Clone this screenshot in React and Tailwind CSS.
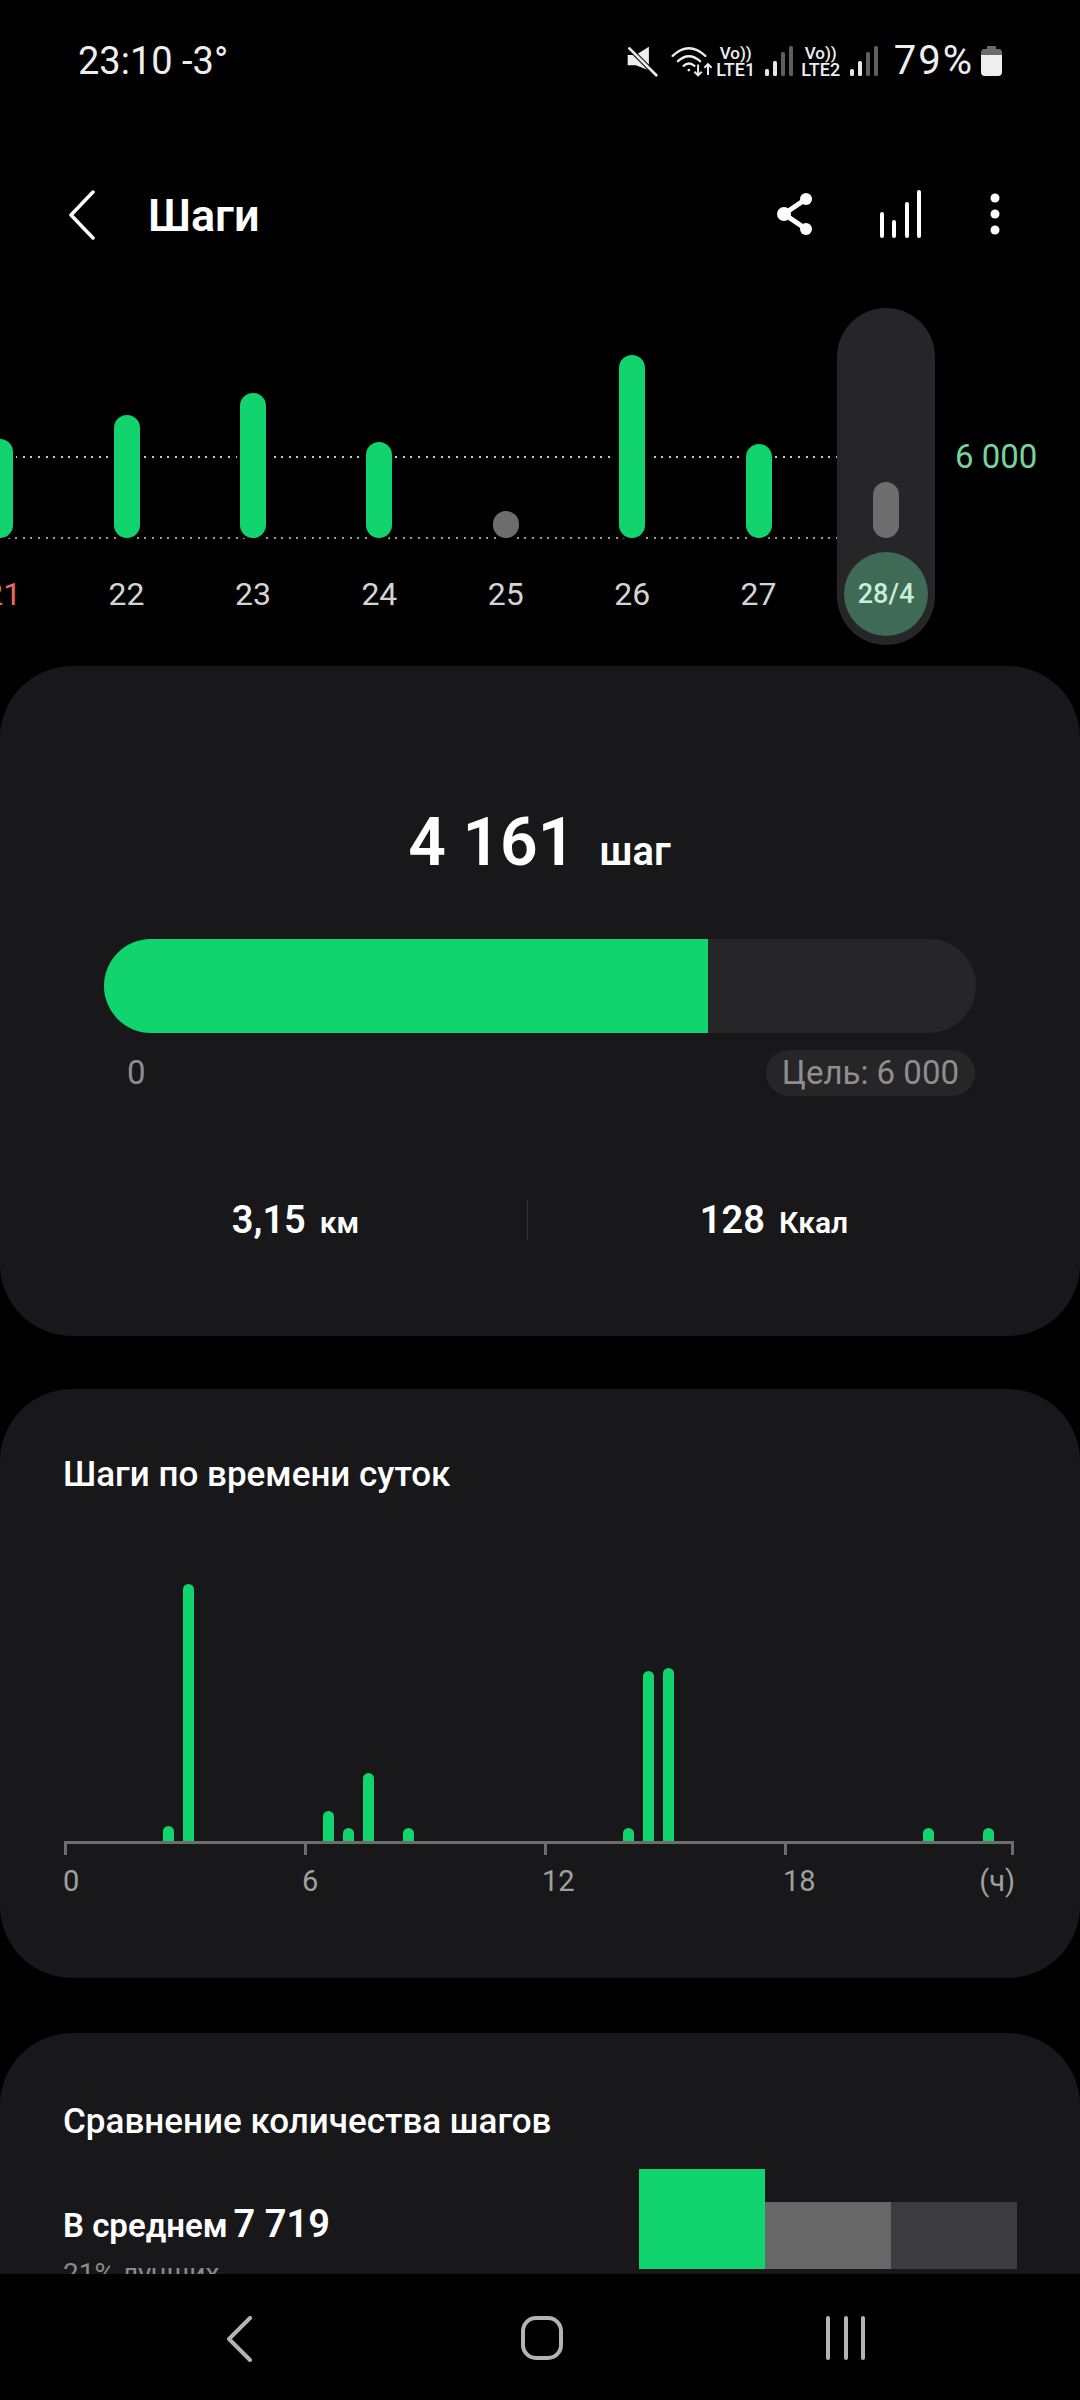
import React from 'react';

const week = [
    { day: '21', height: 'h-[99px]', dayColor: 'ml-[6px] text-[#e46a66]', color: 'bg-[#12d46f]' },
    { day: '22', height: 'h-[123px]', dayColor: 'text-[#d4d4d4]', color: 'bg-[#12d46f]' },
    { day: '23', height: 'h-[145px]', dayColor: 'text-[#d4d4d4]', color: 'bg-[#12d46f]' },
    { day: '24', height: 'h-[96px]', dayColor: 'text-[#d4d4d4]', color: 'bg-[#12d46f]' },
    { day: '25', height: 'h-[27px]', dayColor: 'text-[#d4d4d4]', color: 'bg-[#6d6d6e]' },
    { day: '26', height: 'h-[183px]', dayColor: 'text-[#d4d4d4]', color: 'bg-[#12d46f]' },
    { day: '27', height: 'h-[94px]', dayColor: 'text-[#d4d4d4]', color: 'bg-[#12d46f]' },
];

// half hour slots with steps, everything else is empty
const hourBars = {
    5: 'h-[15px]',
    6: 'h-[257px]',
    13: 'h-[30px]',
    14: 'h-[13px]',
    15: 'h-[68px]',
    17: 'h-[13px]',
    28: 'h-[13px]',
    29: 'h-[170px]',
    30: 'h-[173px]',
    43: 'h-[13px]',
    46: 'h-[13px]',
};

const slots = Array.from({ length: 48 }, (_, i) => i);

const Signal = () => (
    <svg width="28" height="30" viewBox="0 0 28 30" className="shrink-0">
        <rect x="0" y="23" width="4" height="7" rx="1.5" fill="#e8e8e8" />
        <rect x="8" y="15" width="4" height="15" rx="1.5" fill="#e8e8e8" />
        <rect x="16" y="6" width="4" height="24" rx="1.5" fill="#5e5e5e" />
        <rect x="24" y="0" width="4" height="30" rx="1.5" fill="#5e5e5e" />
    </svg>
);

const Lte = ({ n }) => (
    <div className="flex w-[40px] shrink-0 flex-col items-center text-[#eeeeee]">
        <span className="text-[17px] font-medium leading-[17px]">Vo))</span>
        <span className="text-[18px] font-medium leading-[16px]">LTE{n}</span>
    </div>
);

const StatusBar = () => (
    <div className="flex h-[122px] items-center justify-between pl-[78px] pr-[78px] text-[#eeeeee]">
        <span className="text-[38px] leading-none">23:10 -3°</span>
        <div className="flex items-center">
            <svg width="32" height="31" viewBox="75 78 95 92" className="shrink-0">
                <path d="M80 105 H104 L143 80 V150 L104 135 H80 Z" fill="#eeeeee" />
                <path d="M85 85 L165 165" stroke="#000" strokeWidth="14" />
                <path d="M85 85 L165 165" stroke="#eeeeee" strokeWidth="8" strokeLinecap="round" />
            </svg>
            <svg width="43" height="33" viewBox="200 75 130 100" className="ml-[11px] shrink-0" fill="none" stroke="#eeeeee" strokeWidth="7">
                <path d="M211 108 Q260 62 310 108" strokeLinecap="round" />
                <path d="M227 124 Q260 94 294 124" strokeLinecap="round" />
                <path d="M244 138 Q260 124 277 138" strokeLinecap="round" />
                <circle cx="260" cy="151" r="4" fill="#eeeeee" stroke="none" />
                <path d="M288 134 V166 M277 156 L288 167 L299 156" strokeWidth="6" />
                <path d="M318 166 V134 M307 144 L318 133 L329 144" strokeWidth="6" />
            </svg>
            <div className="ml-[4px]"><Lte n="1" /></div>
            <div className="ml-[9px]"><Signal /></div>
            <div className="ml-[8px]"><Lte n="2" /></div>
            <div className="ml-[9px]"><Signal /></div>
            <span className="ml-[16px] text-[40px] leading-none tracking-[2px]">79%</span>
            <svg width="21" height="30" viewBox="0 0 21 30" className="ml-[7px] shrink-0">
                <path d="M6 0 H15 V3 H18 Q21 3 21 7 V9 H0 V7 Q0 3 3 3 H6 Z" fill="#6b6b6b" />
                <path d="M0 9 H21 V26 Q21 30 17 30 H4 Q0 30 0 26 Z" fill="#eeeeee" />
            </svg>
        </div>
    </div>
);

const Header = () => (
    <div className="flex h-[186px] items-center justify-between pl-[68px] pr-[80px]">
        <div className="flex items-center">
            <svg width="28" height="50" viewBox="0 0 28 50" fill="none" stroke="#ffffff" strokeWidth="3.5" strokeLinecap="round" strokeLinejoin="round">
                <path d="M25 2 L3 25 L25 48" />
            </svg>
            <span className="ml-[52px] text-[45px] font-semibold leading-none text-white">Шаги</span>
        </div>
        <div className="-mt-[2px] flex items-center">
            <svg width="40" height="44" viewBox="0 0 40 44" fill="#ffffff" stroke="#ffffff">
                <path d="M31 7 L9 22 L31 37" fill="none" strokeWidth="5" />
                <circle cx="31" cy="7" r="6" stroke="none" />
                <circle cx="9" cy="22" r="7" stroke="none" />
                <circle cx="31" cy="37" r="6" stroke="none" />
            </svg>
            <svg width="44" height="48" viewBox="0 0 44 48" className="ml-[63px]" fill="none" stroke="#ffffff" strokeWidth="4" strokeLinecap="round">
                <path d="M4 24 V46 M16 32 V46 M29 14 V46 M41 2 V46" />
            </svg>
            <svg width="10" height="42" viewBox="0 0 10 42" className="ml-[68px]" fill="#ffffff">
                <circle cx="5" cy="5" r="4.5" />
                <circle cx="5" cy="21" r="4.5" />
                <circle cx="5" cy="37" r="4.5" />
            </svg>
        </div>
    </div>
);

const WeekChart = () => (
    <div className="relative flex h-[337px]">
        <div className="absolute left-0 top-[148px] h-[2px] w-[837px] bg-[repeating-linear-gradient(90deg,#a4dcbc_0,#a4dcbc_2px,transparent_2px,transparent_7.6px)]" />
        <div className="absolute left-0 top-[229px] h-[2px] w-[837px] bg-[repeating-linear-gradient(90deg,#9a9a9a_0,#9a9a9a_2px,transparent_2px,transparent_7.6px)]" />
        <div className="-ml-[63px] flex w-[885px] shrink-0">
            {week.map((d) => (
                <div key={d.day} className="flex w-[126.4px] shrink-0 flex-col items-center">
                    <div className="flex h-[230px] items-end">
                        <div className={`relative w-[26px] rounded-full shadow-[0_0_0_3px_#000] ${d.height} ${d.color}`} />
                    </div>
                    <span className={`mt-[37px] text-[32px] leading-[38px] ${d.dayColor}`}>{d.day}</span>
                </div>
            ))}
        </div>
        <div className="relative ml-[15px] flex h-[337px] w-[98px] shrink-0 flex-col items-center rounded-full bg-[#262628] pt-[174px]">
            <div className="h-[56px] w-[26px] rounded-full bg-[#6d6d6e]" />
            <div className="mt-[14px] flex h-[84px] w-[84px] items-center justify-center rounded-full bg-[#3f6a55] text-[27px] font-medium text-[#c8eed9]">
                28/4
            </div>
        </div>
        <span className="ml-[20px] mt-[130px] text-[33px] leading-[38px] text-[#74d49c]">6 000</span>
    </div>
);

const SummaryCard = () => (
    <div className="mt-[21px] flex h-[670px] shrink-0 flex-col rounded-[72px] bg-[#18181a] pt-[137px]">
        <div className="flex items-baseline justify-center pr-[1px] leading-[80px] text-white">
            <span className="text-[66px] font-semibold">4 161</span>
            <span className="ml-[24px] text-[40px] font-semibold">шаг</span>
        </div>
        <div className="mx-[104px] mt-[47px] flex h-[94px] overflow-hidden rounded-full bg-[#262628]">
            <div className="w-[604px] bg-[#12d46f]" />
        </div>
        <div className="ml-[104px] mr-[105px] mt-[15px] flex items-center justify-between text-[33px] text-[#8e8e8e]">
            <span className="pl-[23px]">0</span>
            <span className="flex h-[46px] items-center rounded-full bg-[#262628] px-[16px]">Цель: 6 000</span>
        </div>
        <div className="mt-[94px] flex items-center pl-[64px] text-white">
            <div className="flex w-[463px] items-baseline justify-center">
                <span className="text-[38px] font-semibold">3,15</span>
                <span className="ml-[14px] text-[30px] font-semibold">км</span>
            </div>
            <div className="h-[40px] w-[1px] bg-[#333335]" />
            <div className="flex w-[492px] items-baseline justify-center">
                <span className="text-[38px] font-semibold">128</span>
                <span className="ml-[14px] text-[30px] font-semibold">Ккал</span>
            </div>
        </div>
    </div>
);

const HoursCard = () => (
    <div className="mt-[53px] flex h-[589px] shrink-0 flex-col rounded-[72px] bg-[#18181a] pt-[64px]">
        <span className="ml-[63px] text-[35px] font-medium leading-[44px] text-white">Шаги по времени суток</span>
        <div className="ml-[64px] flex h-[344px] items-end">
            {slots.map((i) => (
                <div key={i} className="w-[20px] shrink-0">
                    {hourBars[i] && <div className={`-ml-[1px] w-[11px] rounded-t-full bg-[#12d46f] ${hourBars[i]}`} />}
                </div>
            ))}
        </div>
        <div className="ml-[64px] flex h-[14px] w-[950px] border-t-[3px] border-[#6d6d6d]">
            <div className="w-[240px] border-l-[3px] border-[#6d6d6d]" />
            <div className="w-[240px] border-l-[3px] border-[#6d6d6d]" />
            <div className="w-[240px] border-l-[3px] border-[#6d6d6d]" />
            <div className="flex-1 border-x-[3px] border-[#6d6d6d]" />
        </div>
        <div className="ml-[63px] mt-[8px] flex w-[952px] text-[29px] leading-[36px] text-[#a0a0a0]">
            <span className="w-[239px]">0</span>
            <span className="w-[240px]">6</span>
            <span className="w-[241px]">12</span>
            <span className="w-[120px]">18</span>
            <span className="flex-1 text-right">(ч)</span>
        </div>
    </div>
);

const CompareCard = () => (
    <div className="mt-[55px] shrink-0 rounded-t-[72px] bg-[#18181a] pl-[63px] pr-[63px] pt-[67px] pb-[60px]">
        <span className="block text-[35px] font-medium leading-[44px] text-white">Сравнение количества шагов</span>
        <div className="mt-[25px] flex items-start justify-between">
            <div className="pt-[31px]">
                <div className="flex items-baseline leading-[48px] text-white">
                    <span className="text-[33px] font-semibold">В среднем</span>
                    <span className="ml-[6px] text-[38px] font-semibold">7 719</span>
                </div>
                <div className="mt-[6px] text-[28px] leading-[36px] text-[#8a8a8a]">21% лучших</div>
            </div>
            <div className="flex h-[100px] items-end">
                <div className="h-[100px] w-[126px] bg-[#12d46f]" />
                <div className="h-[67px] w-[126px] bg-[#676767]" />
                <div className="h-[67px] w-[126px] bg-[#3c3c3e]" />
            </div>
        </div>
    </div>
);

const NavBar = () => (
    <div className="flex h-[126px] shrink-0 items-start bg-black pl-[226px] pt-[42px]">
        <svg width="26" height="46" viewBox="0 0 26 46" fill="none" stroke="#b4b4b4" strokeWidth="4" strokeLinecap="round" strokeLinejoin="round">
            <path d="M24 2 L3 23 L24 44" />
        </svg>
        <svg width="44" height="44" viewBox="0 0 44 44" className="ml-[268px]" fill="none" stroke="#b4b4b4" strokeWidth="4">
            <rect x="3" y="2" width="38" height="40" rx="13" />
        </svg>
        <svg width="40" height="44" viewBox="0 0 40 44" className="ml-[262px]" fill="none" stroke="#b4b4b4" strokeWidth="4" strokeLinecap="round">
            <path d="M2 2 V42 M20 2 V42 M37 2 V42" />
        </svg>
    </div>
);

const App = () => {
    return (
        <div className="flex h-[2400px] w-[1080px] flex-col overflow-hidden bg-black font-[family-name:Roboto,sans-serif]">
            <StatusBar />
            <Header />
            <WeekChart />
            <div className="flex min-h-0 flex-1 flex-col overflow-hidden">
                <SummaryCard />
                <HoursCard />
                <CompareCard />
            </div>
            <NavBar />
        </div>
    );
};

export default App;
